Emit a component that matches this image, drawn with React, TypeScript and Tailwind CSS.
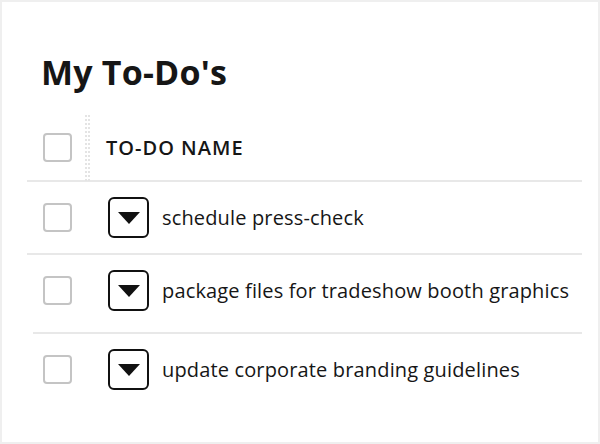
const todos = [
  { name: "schedule press-check", h: "h-[71px]", pb: "" },
  { name: "package files for tradeshow booth graphics", h: "h-[77px]", pb: "pb-[6px]" },
  { name: "update corporate branding guidelines", h: "h-[76px]", pb: "pb-[5px]" },
];

function Checkbox() {
  return <div className="w-[29px] h-[29px] rounded-[4px] border-2 border-[#c4c4c4] bg-white" />;
}

function Toggle() {
  return (
    <div className="w-[41px] h-[41px] rounded-[6px] border-[2.5px] border-[#111] flex items-center justify-center">
      <svg width="22" height="12" viewBox="0 0 22 12">
        <path d="M0 0 L22 0 L11 12 Z" fill="#111" />
      </svg>
    </div>
  );
}

export default function App() {
  return (
    <div className="w-[600px] h-[444px] bg-[#efefef] p-[2px]" style={{ fontFamily: "'Open Sans', Lato, sans-serif" }}>
      <div className="w-full h-full bg-white pt-[47px] pl-[25px] pr-[16px] text-[#161616]">
        <h1 className="ml-[14px] text-[34px] font-bold leading-[46px] tracking-[0.2px]">My To-Do's</h1>
        <div className="mt-[19px]">
          <div className="flex items-center h-[66px]">
            <div className="w-[58px] pl-[16px]">
              <Checkbox />
            </div>
            <div className="h-full w-[5px] border-l-2 border-r-2 border-dotted border-[#e4e4e4] mt-[2px]" />
            <div className="pl-[16px] pt-[2px] text-[20px] font-semibold tracking-[1px] leading-none">TO-DO NAME</div>
          </div>
          <div className="h-[2px] bg-[#e8e8e8]" />
          {todos.map((t, i) => (
            <div key={i}>
              <div className={`flex items-center ${t.h} ${t.pb}`}>
                <div className="w-[81px] pl-[16px]">
                  <Checkbox />
                </div>
                <Toggle />
                <div className="pl-[13px] text-[20px] tracking-[0.15px] leading-none">{t.name}</div>
              </div>
              {i === 0 && <div className="h-[2px] bg-[#e8e8e8]" />}
              {i === 1 && <div className="ml-[6px] h-[2px] bg-[#e8e8e8]" />}
            </div>
          ))}
        </div>
      </div>
    </div>
  );
}
